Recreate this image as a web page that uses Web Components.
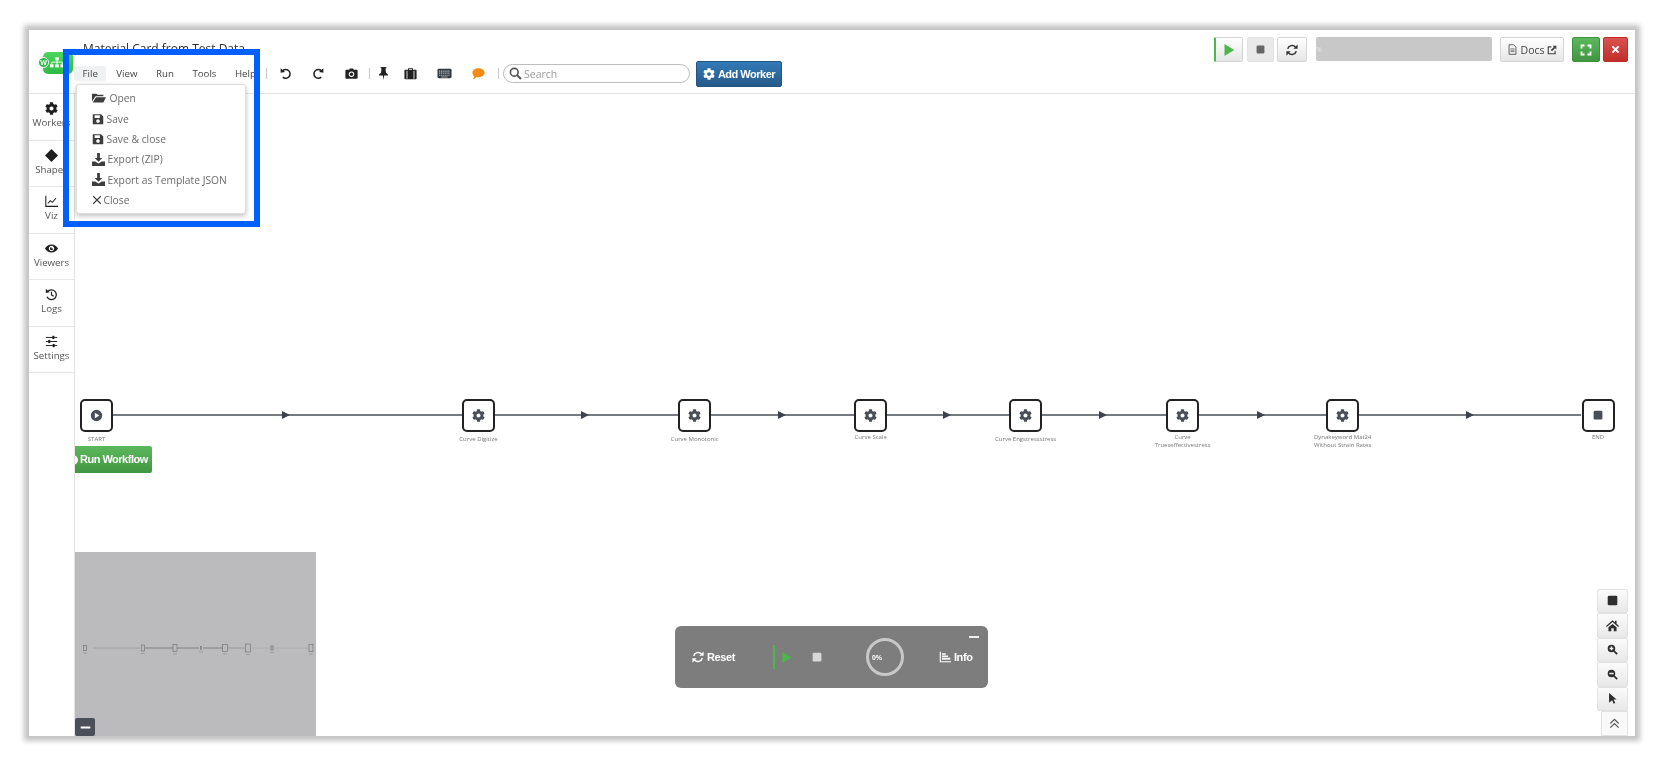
<!DOCTYPE html>
<html>
<head>
<meta charset="utf-8">
<title>Material Card from Test Data</title>
<style>
  html, body { margin: 0; height: 100%; background: #fff; overflow: hidden; }
  body { font-family: "Open Sans", "Liberation Sans", sans-serif; color: #555; }
</style>
</head>
<body>
<app-frame></app-frame>

<script>
const GEAR = "M487.4 315.7l-42.6-24.6c4.3-23.2 4.3-47 0-70.2l42.6-24.6c4.9-2.8 7.1-8.6 5.5-14-11.1-35.6-30-67.8-54.7-94.6-3.8-4.1-10-5.1-14.8-2.3L380.8 110c-17.9-15.4-38.5-27.3-60.8-35.1V25.8c0-5.6-3.9-10.5-9.4-11.7-36.7-8.2-74.3-7.8-109.2 0-5.5 1.2-9.4 6.1-9.4 11.7V75c-22.2 7.9-42.8 19.8-60.8 35.1L88.7 85.5c-4.9-2.8-11-1.9-14.8 2.3-24.7 26.7-43.6 58.9-54.7 94.6-1.7 5.4.6 11.2 5.5 14L67.3 221c-4.3 23.2-4.3 47 0 70.2l-42.6 24.6c-4.9 2.8-7.1 8.6-5.5 14 11.1 35.6 30 67.8 54.7 94.6 3.8 4.1 10 5.1 14.8 2.3l42.6-24.6c17.9 15.4 38.5 27.3 60.8 35.1v49.2c0 5.6 3.9 10.5 9.4 11.7 36.7 8.2 74.3 7.8 109.2 0 5.5-1.2 9.4-6.1 9.4-11.7v-49.2c22.2-7.9 42.8-19.8 60.8-35.1l42.6 24.6c4.9 2.8 11 1.9 14.8-2.3 24.7-26.7 43.6-58.9 54.7-94.6 1.5-5.5-.7-11.3-5.6-14.1zM256 336c-44.1 0-80-35.9-80-80s35.9-80 80-80 80 35.9 80 80-35.9 80-80 80z";

const ICONS = {
  gear: `<svg viewBox="0 0 512 512"><path d="${GEAR}"/></svg>`,
  folder: `<svg viewBox="0 0 16 16"><path d="M0 3h5l1.3 1.3H13V6H4L0 12zM4.6 7H16l-3 6H0.8z"/></svg>`,
  save: `<svg viewBox="0 0 16 16"><path fill-rule="evenodd" d="M1 1.5h11l3 3v9.7a.8.8 0 0 1-.8.8H1.8a.8.8 0 0 1-.8-.8zM3.5 3v3.5h7V3zM8 8.3a2.4 2.4 0 1 0 .01 0z"/></svg>`,
  download: `<svg viewBox="0 0 16 16"><path d="M6.3 0h3.4v6h3L8 10.8 3.3 6h3zM0 10.5h4L8 13l4-2.500h4V16H0z"/></svg>`,
  close: `<svg viewBox="0 0 16 16"><path d="M2 2l12 12M14 2L2 14" stroke="currentColor" stroke-width="1.8" fill="none"/></svg>`,
  times: `<svg viewBox="0 0 16 16"><path d="M2.500 2.500l11 11M13.500 2.500l-11 11" stroke="currentColor" stroke-width="3.600" fill="none"/></svg>`,
  undo: `<svg viewBox="0 0 16 16"><path d="M4 5a5.400 5.400 0 1 1 .6 7.500" fill="none" stroke="currentColor" stroke-width="1.900"/><path d="M2 1.500l5.500 4.800L2 7z"/></svg>`,
  redo: `<svg viewBox="0 0 16 16"><path d="M12 5a5.400 5.400 0 1 0-.6 7.500" fill="none" stroke="currentColor" stroke-width="1.900"/><path d="M14 1.500L8.500 6.300 14 7z"/></svg>`,
  camera: `<svg viewBox="0 0 16 16"><path fill-rule="evenodd" d="M1.500 3.500H5l1-1.800h4l1 1.800h3.500a1 1 0 0 1 1 1v9a1 1 0 0 1-1 1h-13a1 1 0 0 1-1-1v-9a1 1 0 0 1 1-1zM8 5.400a3.500 3.500 0 1 0 .01 0z"/><circle cx="8" cy="8.900" r="2.100"/></svg>`,
  pin: `<svg viewBox="0 0 16 16"><path d="M4.500 0h7v1.400h-1L11 7l2.500 2.200v1.300H8.800L8 16l-.8-5.500H2.500V9.200L5 7l.5-5.600h-1z"/></svg>`,
  suitcase: `<svg viewBox="0 0 16 16"><path fill-rule="evenodd" d="M5 3.500V1.500h6v2h3.500a1 1 0 0 1 1 1v9.500a1 1 0 0 1-1 1h-13a1 1 0 0 1-1-1V4.500a1 1 0 0 1 1-1zM6.200 3.500h3.600v-1H6.200zM3.200 4.500v10h1v-10zM11.800 4.500v10h1v-10z"/></svg>`,
  keyboard: `<svg viewBox="0 0 16 12"><rect x=".5" y="1" width="15" height="10" rx="1.500" fill="#2f363e"/><path d="M2 3.400h12M2 5.600h12M2 7.800h12" stroke="#b9bec3" stroke-width="1.200" stroke-dasharray="1.300 .7" fill="none"/><path d="M4.500 9.700h7" stroke="#b9bec3" stroke-width=".8"/></svg>`,
  comment: `<svg viewBox="0 0 16 16"><path d="M8 1.500c4.200 0 7.500 2.400 7.500 5.500s-3.300 5.500-7.500 5.500c-.9 0-1.700-.1-2.500-.3C4.300 14 2.600 14.600 1 14.800c.9-1 1.600-2.200 1.800-3.400C1.400 10.400.5 8.800.5 7 .5 3.900 3.800 1.500 8 1.500z"/></svg>`,
  search: `<svg viewBox="0 0 16 16"><circle cx="6.500" cy="6.500" r="4.800" fill="none" stroke="currentColor" stroke-width="2"/><path d="M10 10l4.700 4.700" stroke="currentColor" stroke-width="2.600" fill="none"/></svg>`,
  play: `<svg viewBox="0 0 16 16"><path d="M2 0l13 8-13 8z"/></svg>`,
  stop: `<svg viewBox="0 0 16 16"><rect x="1" y="1" width="14" height="14" rx="2"/></svg>`,
  refresh: `<svg viewBox="0 0 16 16"><path d="M2.300 6.500A6 6 0 0 1 12.600 4" fill="none" stroke="currentColor" stroke-width="2"/><path d="M15.500 0.500v5.700H9.800z"/><path d="M13.700 9.500A6 6 0 0 1 3.400 12" fill="none" stroke="currentColor" stroke-width="2"/><path d="M.5 15.500V9.800h5.700z"/></svg>`,
  file: `<svg viewBox="0 0 16 16"><path d="M3 1h6.500L13 4.500V15H3z" fill="none" stroke="currentColor" stroke-width="1.200"/><path d="M5 7h6M5 9h6M5 11h6" stroke="currentColor" stroke-width=".9"/></svg>`,
  external: `<svg viewBox="0 0 16 16"><path d="M7 3H2v11h11V9" fill="none" stroke="currentColor" stroke-width="1.800"/><path d="M9 1h6v6l-2-2-5 5-2-2 5-5z"/></svg>`,
  expand: `<svg viewBox="0 0 16 16"><path d="M2 6V2h4M10 2h4v4M14 10v4h-4M6 14H2v-4" fill="none" stroke="currentColor" stroke-width="2.400"/></svg>`,
  chart: `<svg viewBox="0 0 16 16"><path d="M1 1h1.500v12.500H16V15H1z"/><rect x="4" y="3" width="5" height="2"/><rect x="4" y="6" width="8" height="2"/><rect x="4" y="9" width="11" height="2.500"/></svg>`,
  home: `<svg viewBox="0 0 16 16"><path d="M8 1.500L0 8.500l1 1.200 7-6 7 6 1-1.200-3-2.600V2h-2v2.200zM3 10.200L8 6l5 4.200V15H9.500v-3.500h-3V15H3z"/></svg>`,
  zoomin: `<svg viewBox="0 0 16 16"><path fill-rule="evenodd" d="M6.500 1a5.500 5.500 0 1 1 0 11 5.500 5.500 0 0 1 0-11zM5.500 3.800v1.700H3.800v2h1.700v1.700h2V7.500h1.700v-2H7.500V3.800z"/><path d="M10 10l4.800 4.800" stroke="currentColor" stroke-width="2.600"/></svg>`,
  zoomout: `<svg viewBox="0 0 16 16"><path fill-rule="evenodd" d="M6.500 1a5.500 5.500 0 1 1 0 11 5.500 5.500 0 0 1 0-11zM3.400 5.500v2h6.200v-2z"/><path d="M10 10l4.800 4.800" stroke="currentColor" stroke-width="2.600"/></svg>`,
  cursor: `<svg viewBox="0 0 16 16"><path d="M3 0l11 9.500H9.600l2.400 5-2.300 1.200-2.300-5.200L3 14z"/></svg>`,
  chevrons: `<svg viewBox="0 0 16 16"><path d="M2 8l6-6 6 6M2 14l6-6 6 6" fill="none" stroke="currentColor" stroke-width="1.700"/></svg>`,
  diamond: `<svg viewBox="0 0 16 16"><path d="M8 0l8 8-8 8-8-8z"/></svg>`,
  line: `<svg viewBox="0 0 16 16"><path d="M1 1v13h15" fill="none" stroke="currentColor" stroke-width="1.300"/><path d="M3.500 10.500l3-3.500 2.500 2 4.500-5" fill="none" stroke="currentColor" stroke-width="1.300"/></svg>`,
  eye: `<svg viewBox="0 0 16 16"><path fill-rule="evenodd" d="M8 3c3.700 0 6.700 2.300 8 5-1.300 2.700-4.300 5-8 5s-6.700-2.300-8-5c1.300-2.700 4.300-5 8-5zM8 4.700a3.300 3.300 0 1 0 .01 0z"/><path d="M8 6a2 2 0 1 0 2 2H8z"/></svg>`,
  history: `<svg viewBox="0 0 16 16"><path d="M3.200 4.500A6 6 0 1 1 2.500 10.800" fill="none" stroke="currentColor" stroke-width="1.600"/><path d="M1 1l4.700 4.200L1 6z"/><path d="M8 4.500V8.500l2.600 1.500" fill="none" stroke="currentColor" stroke-width="1.500"/></svg>`,
  sliders: `<svg viewBox="0 0 16 16"><path d="M1 3h14M1 8h14M1 13h14" stroke="currentColor" stroke-width="1.200"/><rect x="9" y="1" width="2.500" height="4"/><rect x="4" y="6" width="2.500" height="4"/><rect x="9.500" y="11" width="2.500" height="4"/></svg>`,
  circleplay: `<svg viewBox="0 0 16 16"><path fill-rule="evenodd" d="M8 1a7 7 0 1 1 0 14A7 7 0 0 1 8 1zM6 4.500v7L11.500 8z"/></svg>`,
  minus: `<svg viewBox="0 0 16 16"><rect x="1" y="6.500" width="14" height="3" rx=".5"/></svg>`
};

class UiIcon extends HTMLElement {
  connectedCallback() {
    const size = this.getAttribute("size") || 14;
    this.attachShadow({ mode: "open" }).innerHTML = `
      <style>
        :host { display: inline-flex; width: ${size}px; height: ${size}px; flex: none; }
        svg { width: 100%; height: 100%; fill: currentColor; display: block; }
      </style>
      ${ICONS[this.getAttribute("name")]}`;
  }
}

class MenuLabel extends HTMLElement {
  constructor() {
    super();
    this.attachShadow({ mode: "open" }).innerHTML = `
      <style>
        :host { display: block; padding: 0 8.500px; height: 15px; line-height: 15px; font-size: 9.700px; color: #444; border-radius: 2px; margin-right: 1.500px; }
        :host([active]) { background: #eff1f2; }
      </style>
      <slot></slot>`;
  }
}

class ToolSlot extends HTMLElement {
  connectedCallback() {
    const w = this.getAttribute("w") || 33;
    this.attachShadow({ mode: "open" }).innerHTML = `
      <style>
        :host { display: flex; width: ${w}px; justify-content: center; align-items: center; color: #222; }
      </style>
      <ui-icon name="${this.getAttribute("icon")}" size="${this.getAttribute("size") || 13}"></ui-icon>`;
  }
}

class BarSep extends HTMLElement {
  constructor() {
    super();
    this.attachShadow({ mode: "open" }).innerHTML = `
      <style>:host { display: block; width: 1px; height: 11px; background: #c9c9c9; flex: none; }</style>`;
  }
}

class GradButton extends HTMLElement {
  constructor() {
    super();
    this.attachShadow({ mode: "open" }).innerHTML = `
      <style>
        :host {
          display: inline-flex; align-items: center; justify-content: center; gap: 3px; flex: none; box-sizing: border-box;
          height: 25px; border-radius: 2px; border: 1px solid #d5d5d5; color: #444;
          background: linear-gradient(#fff, #e6e6e6); font-size: 10.500px;
        }
        :host([kind=blue]) { background: linear-gradient(#337ab7, #265a88); border-color: #245580; color: #fff; font-family: "Liberation Sans", sans-serif; font-weight: 700; letter-spacing: -.5px; }
        :host([kind=green]) { background: linear-gradient(#5cb85c, #419641); border-color: #3e8f3e; color: #fff; }
        :host([kind=red]) { background: linear-gradient(#d9534f, #c12e2a); border-color: #b92c28; color: #fff; }
        :host([kind=flat]) { background: #e9e9e9; border-color: #e2e2e2; color: #666; }
      </style>
      <slot></slot>`;
  }
}

class TopBar extends HTMLElement {
  constructor() {
    super();
    this.attachShadow({ mode: "open" }).innerHTML = `
      <style>
        :host { display: flex; height: 63px; border-bottom: 1px solid #e3e3e3; flex: none; }
        .logo { width: 45px; flex: none; padding: 22px 0 0 9px; box-sizing: border-box; }
        .logo .mark { position: relative; width: 30px; height: 22px; border-radius: 5px; background: linear-gradient(#4bd65c, #2fb945); margin-left: 5px; display: flex; align-items: center; }
        .logo .w { position: absolute; left: -5px; top: 5px; width: 11px; height: 11px; border-radius: 50%; background: #2fb945; border: 1px solid #fff; box-sizing: border-box; color: #fff; font: 700 7px/9px "Liberation Sans", sans-serif; text-align: center; }
        .logo svg { margin-left: 7px; }
        .main { flex: none; padding-top: 10px; }
        .title { font-size: 12px; line-height: 17px; color: #2c2c2c; margin-left: 9px; height: 17px; }
        .row { display: flex; align-items: center; height: 27px; margin-top: 3px; }
        .menu { display: flex; width: 192px; flex: none; }
        .search { box-sizing: border-box; width: 187px; height: 19px; border: 1.500px solid #bdbdbd; border-radius: 10px; margin: 0 8px 0 4px; display: flex; align-items: center; gap: 2px; padding-left: 5px; color: #555; font-size: 10.500px; flex: none; }
        .search span { color: #999; }
        .right { margin-left: auto; display: flex; align-items: flex-start; padding: 7px 7px 0 0; }
        .play { width: 29px; border-left: 2px solid #4cb84c; color: #4cb84c; margin-right: 4px; border-radius: 0 2px 2px 0; }
        .progress { width: 176px; height: 24px; background: #c8c8c8; border-radius: 2px; margin: 0 8px 0 9px; color: #e6e6e6; font-size: 7px; line-height: 26px; }
        .mr { margin-right: 3px; }
      </style>
      <div class="logo">
        <div class="mark">
          <span class="w">W</span>
          <svg width="14" height="12" viewBox="0 0 16 13" fill="#fff"><rect x="6" y="0" width="4" height="3.500"/><rect x="0" y="8" width="4" height="3.500"/><rect x="6" y="8" width="4" height="3.500"/><rect x="12" y="8" width="4" height="3.500"/><path d="M8 3v5M2 8V5.500h12V8" stroke="#fff" fill="none"/></svg>
        </div>
      </div>
      <div class="main">
        <div class="title">Material Card from Test Data</div>
        <div class="row">
          <div class="menu">
            <menu-label active>File</menu-label><menu-label>View</menu-label><menu-label>Run</menu-label><menu-label>Tools</menu-label><menu-label>Help</menu-label>
          </div>
          <bar-sep></bar-sep>
          <tool-slot icon="undo" w="36"></tool-slot>
          <tool-slot icon="redo" w="31"></tool-slot>
          <tool-slot icon="camera" w="35"></tool-slot>
          <bar-sep></bar-sep>
          <tool-slot icon="pin" w="27"></tool-slot>
          <tool-slot icon="suitcase" w="27"></tool-slot>
          <tool-slot icon="keyboard" w="40" size="15"></tool-slot>
          <tool-slot icon="comment" w="28" style="color:#f58a17;margin-right:6px"></tool-slot>
          <bar-sep></bar-sep>
          <label class="search"><ui-icon name="search" size="13"></ui-icon><span>Search</span></label>
          <grad-button kind="blue" style="width:86px;height:26px;font-size:11px;margin-left:-2px"><ui-icon name="gear" size="12"></ui-icon>Add Worker</grad-button>
        </div>
      </div>
      <div class="right">
        <grad-button class="play"><ui-icon name="play" size="12"></ui-icon></grad-button>
        <grad-button kind="flat" style="width:27px" class="mr"><ui-icon name="stop" size="9"></ui-icon></grad-button>
        <grad-button style="width:30px;color:#333"><ui-icon name="refresh" size="12"></ui-icon></grad-button>
        <div class="progress">%</div>
        <grad-button style="width:64px;margin-right:8px"><ui-icon name="file" size="11"></ui-icon>Docs<ui-icon name="external" size="10"></ui-icon></grad-button>
        <grad-button kind="green" style="width:28px;margin-right:3px"><ui-icon name="expand" size="12"></ui-icon></grad-button>
        <grad-button kind="red" style="width:25px"><ui-icon name="times" size="9"></ui-icon></grad-button>
      </div>`;
  }
}

class SideItem extends HTMLElement {
  connectedCallback() {
    this.attachShadow({ mode: "open" }).innerHTML = `
      <style>
        :host { display: flex; flex-direction: column; align-items: center; box-sizing: border-box; height: 46.500px; padding-top: 8px; border-bottom: 1.500px solid #e6e6e6; font-size: 9.700px; line-height: 14px; color: #555; white-space: nowrap; }
        ui-icon { color: #1f1f1f; margin-bottom: 1px; }
      </style>
      <ui-icon name="${this.getAttribute("icon")}" size="13"></ui-icon>
      <slot></slot>`;
  }
}

class SideNav extends HTMLElement {
  constructor() {
    super();
    this.attachShadow({ mode: "open" }).innerHTML = `
      <style>:host { display: block; width: 45px; flex: none; border-right: 1px solid #e3e3e3; }</style>
      <side-item icon="gear">Workers</side-item>
      <side-item icon="diamond">Shapes</side-item>
      <side-item icon="line">Viz</side-item>
      <side-item icon="eye">Viewers</side-item>
      <side-item icon="history">Logs</side-item>
      <side-item icon="sliders">Settings</side-item>`;
  }
}

class WfNode extends HTMLElement {
  connectedCallback() {
    const cx = +this.getAttribute("cx");
    const kind = this.getAttribute("icon") || "gear";
    const size = kind === "stop" ? 10 : 13;
    this.attachShadow({ mode: "open" }).innerHTML = `
      <style>
        :host { position: absolute; left: ${cx - 50}px; top: 304.500px; width: 100px; display: flex; flex-direction: column; align-items: center; }
        .box { box-sizing: border-box; width: 33px; height: 33px; border: 2px solid #222; border-radius: 5px; background: #fff; display: flex; align-items: center; justify-content: center; color: #4a4f57; }
        .label { margin-top: ${this.getAttribute("gap") || 4}px; font-size: 6px; line-height: 7.500px; color: #777; text-align: center; }
      </style>
      <div class="box"><ui-icon name="${kind}" size="${size}"></ui-icon></div>
      <div class="label"><slot></slot></div>`;
  }
}

class MiniMap extends HTMLElement {
  constructor() {
    super();
    const marks = [[10, 3, 5], [68, 3, 6], [100, 4, 7], [126, 1, 3], [150, 5, 7], [173, 5, 8], [197, 2, 4], [236, 4, 7]];
    this.attachShadow({ mode: "open" }).innerHTML = `
      <style>
        :host { position: absolute; left: 0; bottom: 0; width: 241px; height: 184px; background: #bbbbbd; display: block; }
        svg { display: block; }
        .min { position: absolute; left: 0; bottom: 0; width: 20px; height: 18px; background: #4a4f5a; border-radius: 2px; color: #fff; display: flex; align-items: center; justify-content: center; }
      </style>
      <svg width="241" height="184">
        <path d="M18 96H65" stroke="#a0a0a2"/><path d="M70 96H124" stroke="#808082"/><path d="M128 96H148" stroke="#808082"/><path d="M153 96H170" stroke="#9a9a9c"/><path d="M176 96H234" stroke="#b0b0b2"/>
        ${marks.map(([x, w, h]) => `<rect x="${x - w / 2}" y="${96 - h / 2}" width="${w}" height="${h}" fill="#bbbbbd" stroke="#6c6c6e" stroke-width=".6"/>
        <rect x="${x - 2}" y="${96 + h / 2 + 2}" width="4" height="1" fill="#a0a0a2"/>`).join("")}
      </svg>
      <div class="min"><ui-icon name="minus" size="11"></ui-icon></div>`;
  }
}

class RunPanel extends HTMLElement {
  constructor() {
    super();
    this.attachShadow({ mode: "open" }).innerHTML = `
      <style>
        :host { position: absolute; left: 600px; top: 532px; width: 313px; height: 62px; background: #7d7d7d; border-radius: 6px; display: flex; align-items: center; box-sizing: border-box; padding-left: 17px; color: #fff; font: 700 11px "Liberation Sans", sans-serif; letter-spacing: -.4px; }
        .item { display: flex; align-items: center; gap: 3px; }
        .bar { width: 2px; height: 24px; background: #4cb84c; margin-left: 38px; }
        .run { color: #4cb84c; margin-left: 6px; }
        .stop { color: #d8d8d8; margin-left: 20px; }
        .dial { position: relative; box-sizing: border-box; width: 38px; height: 38px; border: 3px solid #c8c8c8; border-radius: 50%; margin-left: 44px; font-size: 7px; line-height: 34px; padding-left: 3px; font-weight: 700; letter-spacing: 0; }
        .info { margin-left: 35px; }
        .hide { position: absolute; right: 9px; top: 10px; width: 10px; height: 2px; background: #eee; }
      </style>
      <div class="item"><ui-icon name="refresh" size="12"></ui-icon>Reset</div>
      <div class="bar"></div>
      <ui-icon class="run" name="play" size="11"></ui-icon>
      <ui-icon class="stop" name="stop" size="10"></ui-icon>
      <div class="dial">0%</div>
      <div class="item info"><ui-icon name="chart" size="12"></ui-icon>Info</div>
      <div class="hide"></div>`;
  }
}

class ZoomControls extends HTMLElement {
  constructor() {
    super();
    const btn = (n, s) => `<div class="b"><ui-icon name="${n}" size="${s}"></ui-icon></div>`;
    this.attachShadow({ mode: "open" }).innerHTML = `
      <style>
        :host { position: absolute; right: 7px; bottom: 0; width: 31px; display: flex; flex-direction: column; align-items: flex-end; color: #2f2f2f; }
        .b { box-sizing: border-box; width: 31px; height: 24.500px; border: 1px solid #e2e2e2; border-radius: 2px; background: linear-gradient(#fbfbfb, #e8e8e8); display: flex; align-items: center; justify-content: center; }
        .c { width: 27px; height: 25px; background: #f9f9f9; border-radius: 0; color: #555; }
      </style>
      ${btn("stop", 11)}${btn("home", 13)}${btn("zoomin", 11)}${btn("zoomout", 11)}${btn("cursor", 11)}
      <div class="b c"><ui-icon name="chevrons" size="11"></ui-icon></div>`;
  }
}

class WorkflowCanvas extends HTMLElement {
  constructor() {
    super();
    const arrows = [211, 510, 707, 872, 1028, 1186, 1395];
    this.attachShadow({ mode: "open" }).innerHTML = `
      <style>
        :host { display: block; position: relative; flex: 1; height: 642px; overflow: hidden; }
        svg.lines { position: absolute; left: 0; top: 0; }
        .run { position: absolute; left: 0; top: 352px; width: 77px; height: 27px; box-sizing: border-box; background: linear-gradient(#5cb85c, #419641); border-radius: 0 2px 2px 0; color: #fff; font: 700 11px/27px "Liberation Sans", sans-serif; letter-spacing: -.5px; white-space: nowrap; padding-left: 5px; overflow: hidden; }
        .run i { position: absolute; left: -7px; top: 9px; width: 10px; height: 10px; border-radius: 50%; background: #fff; }
      </style>
      <svg class="lines" width="1560" height="642">
        <path d="M38 321H1506" stroke="#484f58" stroke-width="1.600" fill="none"/>
        ${arrows.map(x => `<path d="M${x - 4} 317L${x + 4} 321L${x - 4} 325z" fill="#3c434c"/>`).join("")}
      </svg>
      <wf-node cx="21.500" icon="circleplay">START</wf-node>
      <wf-node cx="403.500">Curve Digitize</wf-node>
      <wf-node cx="619.700">Curve Monotonic</wf-node>
      <wf-node cx="795.700" gap="2.500">Curve Scale</wf-node>
      <wf-node cx="950.600">Curve Engstressstress</wf-node>
      <wf-node cx="1107.600" gap="2.500">Curve<br>Trueseffectivestress</wf-node>
      <wf-node cx="1267.700" gap="2.500">Dynakeyword Mat24<br>Without Strain Rates</wf-node>
      <wf-node cx="1523" icon="stop" gap="2.500">END</wf-node>
      <div class="run"><i></i>Run Workflow</div>
      <mini-map></mini-map>
      <run-panel></run-panel>
      <zoom-controls></zoom-controls>`;
  }
}

class FileMenu extends HTMLElement {
  constructor() {
    super();
    const row = (icon, label, gap, s) => `<div class="i" style="gap:${gap}px"><ui-icon name="${icon}" size="${s}"></ui-icon>${label}</div>`;
    this.attachShadow({ mode: "open" }).innerHTML = `
      <style>
        :host { position: absolute; left: 46.500px; top: 54px; width: 170px; height: 130px; box-sizing: border-box; padding: 3px 0 0 15px; background: #fff; border: 1px solid #dedede; border-radius: 3px; box-shadow: 0 2px 5px rgba(0,0,0,.25); font-size: 10.300px; color: #6a6a6a; }
        .i { display: flex; align-items: center; height: 20.400px; white-space: nowrap; }
        ui-icon { color: #3d3d3d; }
      </style>
      ${row("folder", "Open", 4, 14)}
      ${row("save", "Save", 3, 12)}
      ${row("save", "Save &amp; close", 3, 12)}
      ${row("download", "Export (ZIP)", 3, 13)}
      ${row("download", "Export as Template JSON", 3, 13)}
      ${row("close", "Close", 2, 10)}`;
  }
}

class AppFrame extends HTMLElement {
  constructor() {
    super();
    this.attachShadow({ mode: "open" }).innerHTML = `
      <style>
        :host { display: block; position: relative; box-sizing: border-box; margin: 30px 0 0 29px; width: 1606px; height: 706px; background: #fff; box-shadow: 0 0 5px 5px #c4c4c4; filter: blur(.5px); }
        .body { display: flex; }
        .mark { position: absolute; left: 34px; top: 19px; width: 197px; height: 178px; box-sizing: border-box; border: 6px solid #0060fe; }
      </style>
      <top-bar></top-bar>
      <div class="body">
        <side-nav></side-nav>
        <workflow-canvas></workflow-canvas>
      </div>
      <file-menu></file-menu>
      <div class="mark"></div>`;
  }
}

customElements.define("ui-icon", UiIcon);
customElements.define("menu-label", MenuLabel);
customElements.define("tool-slot", ToolSlot);
customElements.define("bar-sep", BarSep);
customElements.define("grad-button", GradButton);
customElements.define("top-bar", TopBar);
customElements.define("side-item", SideItem);
customElements.define("side-nav", SideNav);
customElements.define("wf-node", WfNode);
customElements.define("mini-map", MiniMap);
customElements.define("run-panel", RunPanel);
customElements.define("zoom-controls", ZoomControls);
customElements.define("workflow-canvas", WorkflowCanvas);
customElements.define("file-menu", FileMenu);
customElements.define("app-frame", AppFrame);
</script>
</body>
</html>
